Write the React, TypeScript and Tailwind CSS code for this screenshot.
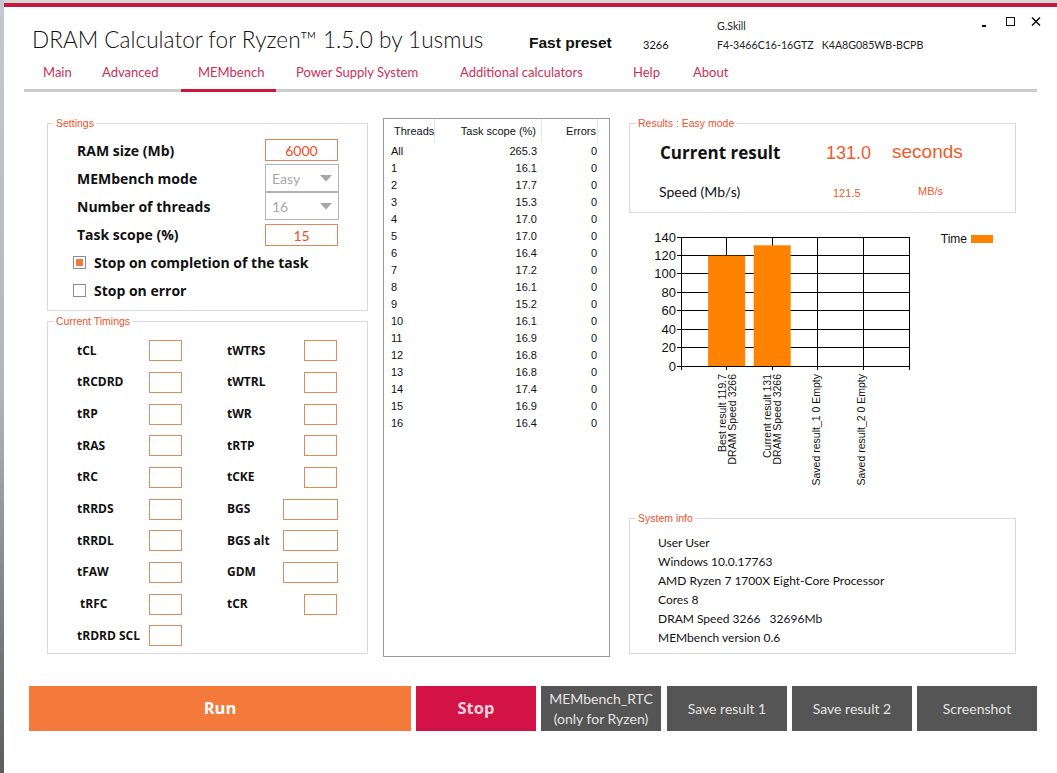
import React from "react";

const tabs = [
    { label: "Main", cls: "w-[62px] pl-[19px]" },
    { label: "Advanced", cls: "w-[95px] pl-[16px]" },
    { label: "MEMbench", cls: "w-[95px] pl-[17px]", active: true },
    { label: "Power Supply System", cls: "w-[168px] pl-[20px]" },
    { label: "Additional calculators", cls: "w-[173px] pl-[16px]" },
    { label: "Help", cls: "w-[60px] pl-[16px]" },
    { label: "About", cls: "w-[70px] pl-[16px]" },
];

const threads = [
    ["All", "265.3"],
    ["1", "16.1"],
    ["2", "17.7"],
    ["3", "15.3"],
    ["4", "17.0"],
    ["5", "17.0"],
    ["6", "16.4"],
    ["7", "17.2"],
    ["8", "16.1"],
    ["9", "15.2"],
    ["10", "16.1"],
    ["11", "16.9"],
    ["12", "16.8"],
    ["13", "16.8"],
    ["14", "17.4"],
    ["15", "16.9"],
    ["16", "16.4"],
];

type Right = { label: string; wide?: boolean } | null;

const timings: { left: string; indent?: boolean; right: Right }[] = [
    { left: "tCL", right: { label: "tWTRS" } },
    { left: "tRCDRD", right: { label: "tWTRL" } },
    { left: "tRP", right: { label: "tWR" } },
    { left: "tRAS", right: { label: "tRTP" } },
    { left: "tRC", right: { label: "tCKE" } },
    { left: "tRRDS", right: { label: "BGS", wide: true } },
    { left: "tRRDL", right: { label: "BGS alt", wide: true } },
    { left: "tFAW", right: { label: "GDM", wide: true } },
    { left: "tRFC", indent: true, right: { label: "tCR" } },
    { left: "tRDRD SCL", right: null },
];

const systemInfo = [
    "User User",
    "Windows 10.0.17763",
    "AMD Ryzen 7 1700X Eight-Core Processor",
    "Cores 8",
    "DRAM Speed 3266\u00a0\u00a0 32696Mb",
    "MEMbench version 0.6",
];

function GroupBox({ title, className, children }: { title: string; className: string; children: React.ReactNode }) {
    return (
        <div className={`border border-[#d9d9d9] ${className}`}>
            <div className="-mt-[7px] ml-[6px] px-[2px] w-fit bg-white text-[10.5px] leading-[13px] text-[#f0502a] font-['Liberation_Sans',Arial,sans-serif]">
                {title}
            </div>
            {children}
        </div>
    );
}

function Dropdown({ value }: { value: string }) {
    return (
        <div className="w-[74px] h-[28px] border border-[#b4b4b4] flex items-center justify-between pl-[6px] pr-[6px] text-[14px] text-[#a8a8a8]">
            <span>{value}</span>
            <svg width="12" height="7" viewBox="0 0 12 7">
                <path d="M0 0 L12 0 L6 6.5 Z" fill="#a6a6a6" />
            </svg>
        </div>
    );
}

function Checkbox({ checked, label }: { checked?: boolean; label: string }) {
    return (
        <div className="h-[28px] flex items-center pl-[25px] gap-[8px]">
            <div className="w-[13px] h-[13px] border border-[#8c8c8c] p-[2px] bg-white">
                {checked && <div className="w-full h-full bg-[#f07a3c]" />}
            </div>
            <span className="font-['Open_Sans',sans-serif] font-bold text-[14px] text-[#111]">{label}</span>
        </div>
    );
}

function Chart() {
    const top = 24;
    const bottom = 153;
    const left = 52;
    const right = 280;
    const scale = (bottom - top) / 140;
    const step = (right - left) / 5;
    const yTicks = [0, 20, 40, 60, 80, 100, 120, 140];
    const cats = [1, 2, 3, 4, 5].map((k) => left + step * k);
    const bars = [119.7, 131];

    return (
        <svg width="387" height="305" viewBox="0 0 387 305" className="block">
            {yTicks.map((v) => {
                const y = bottom - v * scale;
                return (
                    <g key={v}>
                        <line x1={left - 4} x2={right} y1={y} y2={y} stroke="#000" strokeWidth="1" shapeRendering="crispEdges" />
                        <text x={47} y={y + 4.5} textAnchor="end" fontSize="13" fontFamily="Liberation Sans, Arial, sans-serif" fill="#111">
                            {v}
                        </text>
                    </g>
                );
            })}
            {cats.map((x) => (
                <line key={x} x1={x} x2={x} y1={top} y2={bottom + 4} stroke="#000" strokeWidth="1" shapeRendering="crispEdges" />
            ))}
            <line x1={left} x2={left} y1={top} y2={bottom + 4} stroke="#000" strokeWidth="1" shapeRendering="crispEdges" />
            {bars.map((v, i) => {
                const cx = cats[i];
                const h = v * scale;
                return <rect key={i} x={cx - 18.5} y={bottom - h} width="37" height={h} fill="#ff8200" />;
            })}
            <g fontSize="10.5" fontFamily="Liberation Sans, Arial, sans-serif" fill="#111">
                <text transform={`translate(${cats[0]},161) rotate(-90)`} textAnchor="end">
                    <tspan x="0" y="-1">Best result 119.7</tspan>
                    <tspan x="0" y="9">DRAM Speed 3266</tspan>
                </text>
                <text transform={`translate(${cats[1]},161) rotate(-90)`} textAnchor="end">
                    <tspan x="0" y="-1">Current result 131</tspan>
                    <tspan x="0" y="9">DRAM Speed 3266</tspan>
                </text>
                <text transform={`translate(${cats[2]},161) rotate(-90)`} textAnchor="end">
                    <tspan x="0" y="2">Saved result_1 0 Empty</tspan>
                </text>
                <text transform={`translate(${cats[3]},161) rotate(-90)`} textAnchor="end">
                    <tspan x="0" y="2">Saved result_2 0 Empty</tspan>
                </text>
            </g>
            <text x="338" y="30" textAnchor="end" fontSize="12" fontFamily="Liberation Sans, Arial, sans-serif" fill="#111">
                Time
            </text>
            <rect x="342" y="22" width="22" height="8" fill="#ff8200" />
        </svg>
    );
}

export default function App() {
    return (
        <div className="w-[1057px] h-[773px] flex bg-white overflow-hidden font-['Lato',sans-serif] text-[#111]">
            {/* desktop behind the window */}
            <div className="w-[4px] shrink-0 bg-gradient-to-b from-[#c3c9cf] via-[#b1b7bd] to-[#5b5d5f]" />

            <div className="flex-1 flex flex-col">
                <div className="h-[3px] bg-[#d6d6d6]" />
                <div className="h-[4px] bg-[#c8193c]" />

                {/* Title row */}
                <div className="h-[53px] flex items-start">
                    <div className="w-[525px] pl-[28px] pt-[19px] text-[22.6px] leading-[28px] font-light text-[#111] whitespace-nowrap">
                        DRAM Calculator for Ryzen™ 1.5.0 by 1usmus
                    </div>
                    <div className="w-[114px] pt-[26px] text-[15.5px] leading-[20px] font-bold font-['Liberation_Sans',Arial,sans-serif]">
                        Fast preset
                    </div>
                    <div className="w-[74px] pt-[30px] text-[11px] leading-[16px]">3266</div>
                    <div className="pt-[11px] text-[10.6px] leading-[16px] text-[#222]">
                        <div>G.Skill</div>
                        <div className="mt-[3px] whitespace-pre">F4-3466C16-16GTZ   K4A8G085WB-BCPB</div>
                    </div>
                    <div className="ml-auto flex items-start pt-[7px] pr-[8px]">
                        <div className="w-[26px] h-[14px] flex items-end justify-center">
                            <div className="w-[4px] h-[2px] bg-[#111] mb-[1px]" />
                        </div>
                        <div className="w-[26px] h-[14px] flex items-center justify-center">
                            <div className="w-[9px] h-[9px] border-[1.5px] border-[#111]" />
                        </div>
                        <div className="w-[26px] h-[14px] flex items-center justify-center">
                            <svg width="10" height="9" viewBox="0 0 10 9">
                                <path d="M1 0.5 L9 8.5 M9 0.5 L1 8.5" stroke="#111" strokeWidth="1.5" />
                            </svg>
                        </div>
                    </div>
                </div>

                {/* Tabs */}
                <div className="ml-[20px] w-[1013px] h-[32px] flex shadow-[inset_0_-3px_0_#cccccc]">
                    {tabs.map((t) => (
                        <div
                            key={t.label}
                            className={`${t.cls} shrink-0 pt-[4px] text-[13px] leading-[16px] text-[#c9305a] whitespace-nowrap border-b-[3px] ${
                                t.active ? "border-[#c8193c]" : "border-transparent"
                            }`}
                        >
                            {t.label}
                        </div>
                    ))}
                </div>

                {/* Main content */}
                <div className="h-[594px] flex items-start pl-[43px]">
                    {/* Left column */}
                    <div className="w-[321px] flex flex-col pt-[31px] gap-[10px]">
                        <GroupBox title="Settings" className="h-[188px]">
                            <div className="mt-[6px] flex flex-col">
                                <div className="h-[28px] flex items-center pl-[29px]">
                                    <span className="w-[188px] font-['Open_Sans',sans-serif] font-bold text-[14px]">RAM size (Mb)</span>
                                    <div className="w-[73px] h-[22px] border border-[#e0875a] flex items-center justify-center text-[14px] text-[#e8502a]">
                                        6000
                                    </div>
                                </div>
                                <div className="h-[28px] flex items-center pl-[29px]">
                                    <span className="w-[188px] font-['Open_Sans',sans-serif] font-bold text-[14px]">MEMbench mode</span>
                                    <Dropdown value="Easy" />
                                </div>
                                <div className="h-[28px] flex items-center pl-[29px]">
                                    <span className="w-[188px] font-['Open_Sans',sans-serif] font-bold text-[14px]">Number of threads</span>
                                    <Dropdown value="16" />
                                </div>
                                <div className="h-[28px] flex items-center pl-[29px]">
                                    <span className="w-[188px] font-['Open_Sans',sans-serif] font-bold text-[14px]">Task scope (%)</span>
                                    <div className="w-[73px] h-[22px] mt-[2px] border border-[#e0875a] flex items-center justify-center text-[14px] text-[#e8502a]">
                                        15
                                    </div>
                                </div>
                                <Checkbox checked label="Stop on completion of the task" />
                                <Checkbox label="Stop on error" />
                            </div>
                        </GroupBox>

                        <GroupBox title="Current Timings" className="h-[333px]">
                            <div className="mt-[7px] flex flex-col">
                                {timings.map((r) => (
                                    <div key={r.left} className="h-[31.67px] flex items-center pl-[29px]">
                                        <span
                                            className={`w-[72px] font-['Open_Sans',sans-serif] font-bold text-[12px] whitespace-nowrap ${
                                                r.indent ? "pl-[3px]" : ""
                                            }`}
                                        >
                                            {r.left}
                                        </span>
                                        <div className="w-[33px] h-[21px] border border-[#dd8c5e]" />
                                        {r.right && (
                                            <div className="ml-[45px] w-[111px] flex items-center justify-between">
                                                <span className="font-['Open_Sans',sans-serif] font-bold text-[12px] whitespace-nowrap">
                                                    {r.right.label}
                                                </span>
                                                <div
                                                    className={`h-[21px] border border-[#dd8c5e] ${
                                                        r.right.wide ? "w-[55px]" : "w-[33px] mr-[1px]"
                                                    }`}
                                                />
                                            </div>
                                        )}
                                    </div>
                                ))}
                            </div>
                        </GroupBox>
                    </div>

                    {/* Threads table */}
                    <div className="ml-[15px] mt-[26px] w-[227px] h-[539px] border border-[#9a9a9a] font-['Liberation_Sans',Arial,sans-serif] text-[11px] text-[#111]">
                        <div className="h-[24px] flex items-center">
                            <div className="w-[51px] h-full flex items-center pl-[10px] border-r border-[#e6e6e6]">Threads</div>
                            <div className="w-[107px] h-full flex items-center justify-end pr-[5px] border-r border-[#e6e6e6]">
                                Task scope (%)
                            </div>
                            <div className="w-[56px] h-full flex items-center justify-end pr-[1px] border-r border-[#e6e6e6]">Errors</div>
                        </div>
                        {threads.map(([n, v]) => (
                            <div key={n} className="h-[17px] flex items-center leading-[17px]">
                                <div className="w-[51px] pl-[7px]">{n}</div>
                                <div className="w-[107px] text-right pr-[5px]">{v}</div>
                                <div className="w-[56px] text-right pr-[1px]">0</div>
                            </div>
                        ))}
                    </div>

                    {/* Right column */}
                    <div className="ml-[19px] w-[387px] flex flex-col pt-[31px]">
                        <GroupBox title="Results : Easy mode" className="h-[90px]">
                            <div className="mt-[8px] h-[30px] flex items-center pl-[30px]">
                                <span className="w-[166px] font-['Open_Sans',sans-serif] font-bold text-[17px]">Current result</span>
                                <span className="w-[66px] font-['Liberation_Sans',Arial,sans-serif] text-[18px] text-[#ef5b2b]">131.0</span>
                                <span className="font-['Liberation_Sans',Arial,sans-serif] text-[19px] text-[#ef5b2b] -mt-[2px]">seconds</span>
                            </div>
                            <div className="mt-[11px] h-[24px] flex items-center pl-[29px]">
                                <span className="w-[174px] text-[14px]">Speed (Mb/s)</span>
                                <span className="w-[85px] font-['Liberation_Sans',Arial,sans-serif] text-[11px] text-[#ef5b2b] mt-[4px]">121.5</span>
                                <span className="font-['Liberation_Sans',Arial,sans-serif] text-[11px] text-[#ef5b2b]">MB/s</span>
                            </div>
                        </GroupBox>

                        <Chart />

                        <GroupBox title="System info" className="h-[136px]">
                            <div className="mt-[8px] pl-[28px] text-[12px] leading-[19px] text-[#111]">
                                {systemInfo.map((s) => (
                                    <div key={s} className="whitespace-pre">
                                        {s}
                                    </div>
                                ))}
                            </div>
                        </GroupBox>
                    </div>
                </div>

                {/* Bottom buttons */}
                <div className="h-[45px] flex gap-[5px] pl-[25px]">
                    <div className="w-[382px] bg-[#f37a3a] flex items-center justify-center text-white font-['Open_Sans',sans-serif] font-bold text-[16.5px]">
                        Run
                    </div>
                    <div className="w-[120px] bg-[#d31245] flex items-center justify-center text-[#f5d3dc] font-['Open_Sans',sans-serif] font-bold text-[16.5px]">
                        Stop
                    </div>
                    <div className="w-[120px] bg-[#555555] flex flex-col items-center justify-center text-[#e4e4e4] text-[14px] leading-[20px]">
                        <span>MEMbench_RTC</span>
                        <span>(only for Ryzen)</span>
                    </div>
                    <div className="w-[120px] ml-[1px] bg-[#555555] flex items-center justify-center text-[#e4e4e4] text-[14px]">
                        Save result 1
                    </div>
                    <div className="w-[120px] bg-[#555555] flex items-center justify-center text-[#e4e4e4] text-[14px]">
                        Save result 2
                    </div>
                    <div className="w-[120px] bg-[#555555] flex items-center justify-center text-[#e4e4e4] text-[14px]">
                        Screenshot
                    </div>
                </div>
            </div>
        </div>
    );
}
